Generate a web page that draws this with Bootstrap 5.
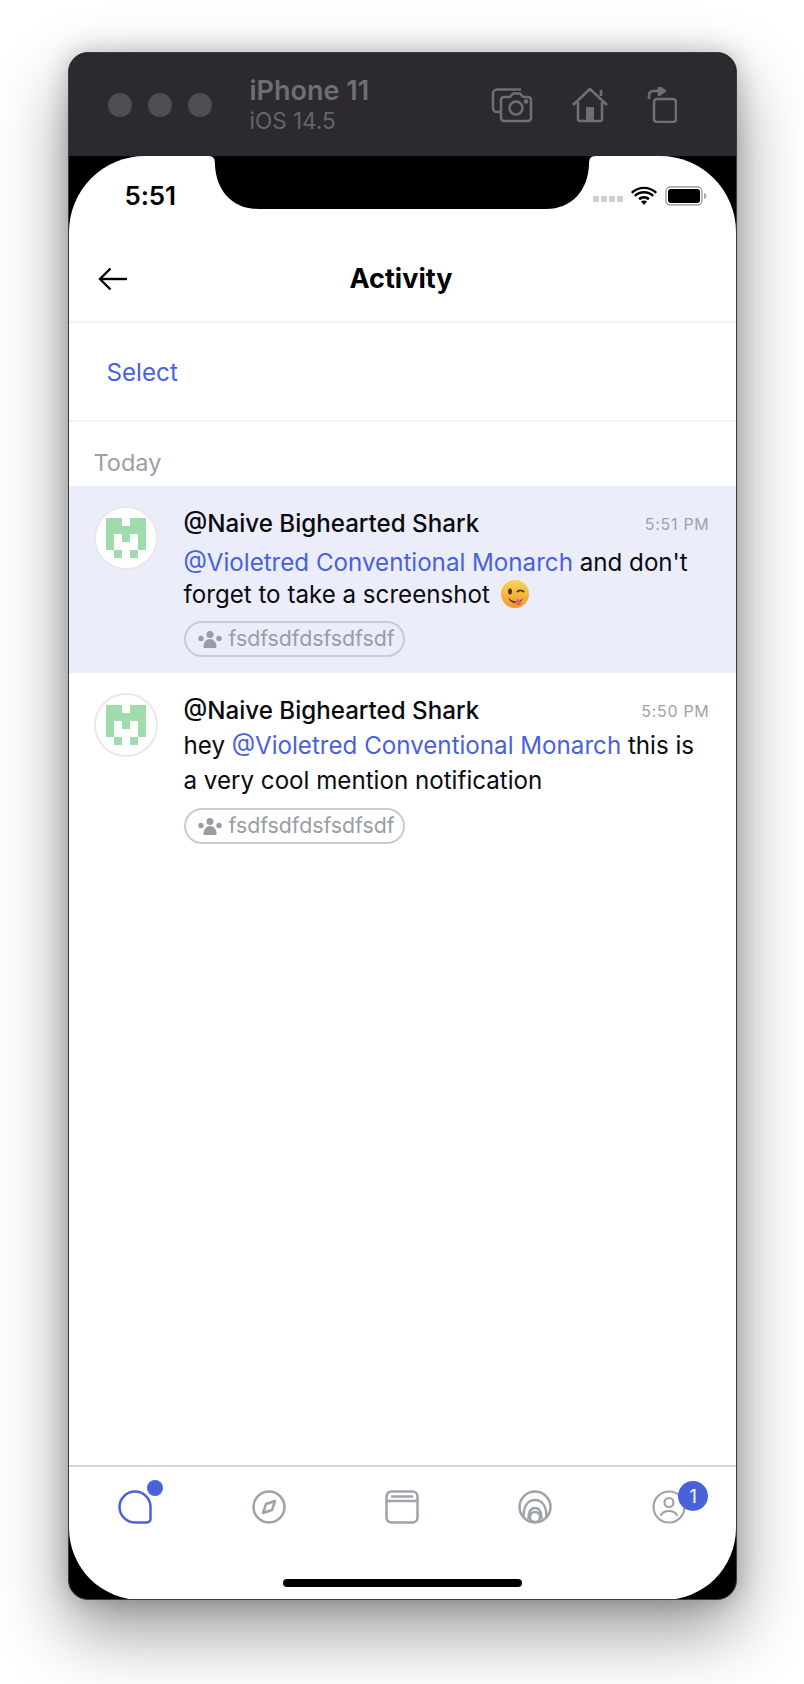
<!DOCTYPE html>
<html lang="en">
<head>
<meta charset="utf-8">
<title>Activity</title>
<link href="https://cdn.jsdelivr.net/npm/bootstrap@5.3.0/dist/css/bootstrap.min.css" rel="stylesheet">
<style>
html,body{background:#fff;font-family:Inter,"Liberation Sans",sans-serif;}
body{width:804px;height:1684px;overflow:hidden;}
.sim-device{width:669px;height:1548px;margin:52px 0 0 67.5px;border-radius:20px;background:#000;overflow:hidden;box-shadow:0 30px 70px rgba(0,0,0,.42),0 0 24px rgba(0,0,0,.22);border:1px solid #3a393d;}
.sim-bar{height:103px;background:#2c2a2f;color:#6f6e73;padding-left:39px;padding-right:59px;}
.sim-dot{width:24px;height:24px;border-radius:50%;background:#4e4d52;}
.sim-dots{gap:16px;margin-right:38px;}
.sim-name{font-size:27px;font-weight:600;line-height:32px;color:#6f6e73;margin-top:-1px;}
.sim-os{font-size:22.5px;line-height:27px;color:#656469;}
.sim-tools{gap:38px;}
.sim-cam{margin-left:2px;}
.sim-screen{position:relative;height:1444px;background:#fff;border-radius:76px 76px 72px 72px;}
.sim-notch{position:absolute;left:139px;top:0;}
.sim-status{height:85px;padding:0 29px 0 56px;}
.sim-clock{font-size:26px;font-weight:600;color:#000;margin-top:-6px;letter-spacing:-.2px;}
.sim-sig{gap:2px;margin-right:8px;margin-top:0;}
.sim-sig i{display:block;width:6px;height:6px;background:#cfcfcf;border-radius:1px;}
.sim-up{margin-top:-6px;}
.sim-head{height:82px;padding:0 24px 4px 29px;border-bottom:2px solid #f1f3f6;position:relative;}
.sim-title{font-size:27px;font-weight:700;color:#000;flex:1;text-align:center;margin-right:37px;}
.sim-select{height:99px;padding:3px 0 0 38px;border-bottom:2px solid #f1f3f6;font-size:24.2px;color:#4a61dc;}
.sim-day{height:64px;padding:18px 0 0 25px;font-size:23.5px;line-height:46px;color:#9ba0a6;}
.sim-row{padding:21px 26px 0 25px;height:187px;}
.sim-row.sim-new{background:#ebedfa;}
.sim-row.sim-plain{height:174px;}
.sim-ava{width:64px;height:64px;border-radius:50%;background:#fff;border:2px solid #e9e9ea;flex:none;margin-right:26px;margin-top:-1px;}
.sim-who{font-size:24.15px;font-weight:500;line-height:34px;color:#0b0b0f;}
.sim-when{font-size:16px;letter-spacing:.7px;color:#9ea3a9;line-height:34px;}
.sim-msg{font-size:24.15px;line-height:32px;color:#0b0b0f;margin-top:6px;}
.sim-plain .sim-msg{line-height:35px;margin-top:0;}
.sim-at{color:#4a61dc;}
.sim-wink{margin-left:3px;}
.sim-chip{height:36px;width:221px;border:2px solid #c9ccd3;border-radius:18px;margin-top:10px;padding-left:12px;gap:7px;font-size:21.3px;color:#989ca3;}
.sim-tabs{position:absolute;left:0;right:0;top:1309px;height:135px;border-top:2px solid #d4d5d7;}
.sim-tab{flex:1 1 0;position:relative;height:80px;}
.sim-pip{position:absolute;width:16px;height:16px;border-radius:50%;background:#4a61dc;left:78px;top:13px;}
.sim-count{position:absolute;width:30px;height:30px;border-radius:50%;background:#4a61dc;color:#fff;font-size:18px;left:76px;top:14px;}
.sim-homebar{position:absolute;left:214px;top:1423px;width:239px;height:8px;border-radius:4px;background:#000;}
</style>
</head>
<body>
<div class="sim-device">
  <div class="sim-bar d-flex align-items-center">
    <div class="sim-dots d-flex"><span class="sim-dot"></span><span class="sim-dot"></span><span class="sim-dot"></span></div>
    <div class="flex-grow-1">
      <div class="sim-name">iPhone 11</div>
      <div class="sim-os">iOS 14.5</div>
    </div>
    <div class="sim-tools d-flex align-items-center">
      <svg class="sim-cam" width="42" height="36" viewBox="0 0 42 36" fill="none" stroke="#6f6e73" stroke-width="2.6" stroke-linejoin="round"><path d="M30 2.5H6a4 4 0 0 0-4 4V21a4 4 0 0 0 4 4h3"/><path d="M13 10h6l3-3.5h7l3 3.5h5a3 3 0 0 1 3 3v18a3 3 0 0 1-3 3H13a3 3 0 0 1-3-3V13a3 3 0 0 1 3-3z"/><circle cx="25" cy="21" r="6.5"/><circle cx="35" cy="14.5" r="1" fill="#6f6e73"/></svg>
      <svg width="38" height="36" viewBox="0 0 38 36" fill="none" stroke="#6f6e73" stroke-width="2.6" stroke-linejoin="round"><path d="M2 18 19 2l17 16"/><path d="M30 9V3"/><path d="M7 15v17a2 2 0 0 0 2 2h20a2 2 0 0 0 2-2V15"/><rect x="15" y="20" width="8" height="14" fill="#6f6e73" stroke="none"/></svg>
      <svg width="30" height="36" viewBox="0 0 30 36" fill="none" stroke="#6f6e73" stroke-width="2.6" stroke-linejoin="round"><rect x="7" y="12" width="22" height="23" rx="3"/><path d="M2 12V8a4 4 0 0 1 4-4h6"/><path d="M12 0l6 4-6 4z" fill="#6f6e73"/></svg>
    </div>
  </div>
  <div class="sim-screen">
    <svg class="sim-notch" width="388" height="54" viewBox="0 0 388 54"><path d="M0 0C6 0 7 3 7 9C8 34 24 53 50 53H338C364 53 380 34 381 9C381 3 382 0 388 0Z" fill="#000"/></svg>
    <div class="sim-status d-flex align-items-center justify-content-between">
      <div class="sim-clock">5:51</div>
      <div class="d-flex align-items-center">
        <div class="sim-sig d-flex"><i></i><i></i><i></i><i></i></div>
        <svg class="me-2 sim-up" width="26" height="19" viewBox="0 0 26 19"><path d="M13 3C8.500 3 4.500 4.800 1.500 7.700L0 6C3.400 2.700 8 .7 13 .7s9.600 2 13 5.300l-1.500 1.700C21.500 4.800 17.500 3 13 3z"/><path d="M13 7.500c-3.200 0-6 1.200-8.200 3.200L3 8.900C5.700 6.400 9.200 4.900 13 4.900s7.300 1.500 10 4l-1.800 1.800C19 8.700 16.200 7.500 13 7.500z"/><path d="M13 10c-2.300 0-4.300.9-5.800 2.300L9 14.200c1-.9 2.500-1.500 4-1.500s3 .6 4 1.500l1.800-1.900C17.300 10.900 15.300 10 13 10z"/><path d="M13 19l-3-3.500c.8-.6 1.900-1 3-1s2.200.4 3 1z"/></svg>
        <svg class="sim-up" width="42" height="20" viewBox="0 0 42 20"><rect x=".9" y=".9" width="36" height="18" rx="4.500" fill="none" stroke="#a9a9a9" stroke-width="1.600"/><rect x="3" y="3" width="32" height="14" rx="3"/><path d="M39 7c1.600.4 2.400 1.500 2.400 3s-.8 2.600-2.400 3z" fill="#a9a9a9"/></svg>
      </div>
    </div>
    <div class="sim-head d-flex align-items-center">
      <svg width="30" height="24" viewBox="0 0 30 24" fill="none" stroke="#000" stroke-width="2.400"><path d="M29 12H2"/><path d="M12.500 1.500 2 12l10.500 10.500"/></svg>
      <div class="sim-title">Activity</div>
    </div>
    <div class="sim-select d-flex align-items-center">Select</div>
    <div class="sim-day">Today</div>

    <div class="sim-row sim-new d-flex">
      <div class="sim-ava d-flex align-items-center justify-content-center">
        <svg width="40" height="40" viewBox="0 0 5 5" fill="#a0dcab" shape-rendering="crispEdges"><path d="M0 0h2v1h1V0h2v4H4V3H4V2H3v1H2V2H1v2H0z"/><rect x="1" y="4" width="1" height="1"/><rect x="3" y="4" width="1" height="1"/></svg>
      </div>
      <div class="flex-grow-1">
        <div class="d-flex justify-content-between"><span class="sim-who">@Naive Bighearted Shark</span><span class="sim-when">5:51 PM</span></div>
        <div class="sim-msg"><span class="sim-at">@Violetred Conventional Monarch</span> and don't forget to take a screenshot
          <svg width="30" height="30" viewBox="0 0 30 30" class="align-text-bottom sim-wink"><defs><linearGradient id="fa" x1="0" y1="0" x2="0" y2="1"><stop offset="0" stop-color="#fbd35a"/><stop offset="1" stop-color="#f09a2c"/></linearGradient></defs><circle cx="15" cy="15" r="14" fill="url(#fa)"/><ellipse cx="10" cy="12.500" rx="2" ry="3" fill="#50341a"/><path d="M17 13c2-2 5-2 7 0" fill="none" stroke="#50341a" stroke-width="2"/><path d="M8 18c3 5 11 6 15 1-2 7-13 7-15-1z" fill="#50341a"/><path d="M17 20c3 1 5 3 3 6-3 1-5-1-5-3z" fill="#ef5f6b"/></svg>
        </div>
        <div class="sim-chip d-inline-flex align-items-center">
          <svg width="24" height="17" viewBox="0 0 24 17" fill="#989ca3"><circle cx="12" cy="3.500" r="3.500"/><circle cx="3" cy="7.500" r="2.700"/><circle cx="21" cy="7.500" r="2.700"/><path d="M5.500 16c0-5 3-8 6.500-8s6.500 3 6.500 8c0 1-1 1-2 1h-9c-1 0-2 0-2-1z"/></svg>
          <span>fsdfsdfdsfsdfsdf</span>
        </div>
      </div>
    </div>

    <div class="sim-row sim-plain d-flex">
      <div class="sim-ava d-flex align-items-center justify-content-center">
        <svg width="40" height="40" viewBox="0 0 5 5" fill="#a0dcab" shape-rendering="crispEdges"><path d="M0 0h2v1h1V0h2v4H4V3H4V2H3v1H2V2H1v2H0z"/><rect x="1" y="4" width="1" height="1"/><rect x="3" y="4" width="1" height="1"/></svg>
      </div>
      <div class="flex-grow-1">
        <div class="d-flex justify-content-between"><span class="sim-who">@Naive Bighearted Shark</span><span class="sim-when">5:50 PM</span></div>
        <div class="sim-msg">hey <span class="sim-at">@Violetred Conventional Monarch</span> this is <br>a very cool mention notification</div>
        <div class="sim-chip d-inline-flex align-items-center">
          <svg width="24" height="17" viewBox="0 0 24 17" fill="#989ca3"><circle cx="12" cy="3.500" r="3.500"/><circle cx="3" cy="7.500" r="2.700"/><circle cx="21" cy="7.500" r="2.700"/><path d="M5.500 16c0-5 3-8 6.500-8s6.500 3 6.500 8c0 1-1 1-2 1h-9c-1 0-2 0-2-1z"/></svg>
          <span>fsdfsdfdsfsdfsdf</span>
        </div>
      </div>
    </div>

    <div class="sim-tabs d-flex">
      <div class="sim-tab d-flex align-items-center justify-content-center">
        <svg width="34" height="34" viewBox="0 0 34 34" fill="none" stroke="#4a61dc" stroke-width="2.500"><path d="M17 1.500C25.500 1.500 32.500 8.500 32.500 17V29a3.500 3.500 0 0 1-3.500 3.500H17C8.500 32.500 1.500 25.500 1.500 17S8.500 1.500 17 1.500z"/></svg>
        <span class="sim-pip"></span>
      </div>
      <div class="sim-tab d-flex align-items-center justify-content-center">
        <svg width="34" height="34" viewBox="0 0 34 34" fill="none" stroke="#9ea3a9" stroke-width="2.500"><circle cx="17" cy="17" r="15.500"/><path d="M23 11 20 20 11 23 14 14z" stroke-linejoin="round"/></svg>
      </div>
      <div class="sim-tab d-flex align-items-center justify-content-center">
        <svg width="34" height="34" viewBox="0 0 34 34" fill="none" stroke="#9ea3a9" stroke-width="2.500"><rect x="1.500" y="1.500" width="31" height="31" rx="5"/><path d="M1.500 11h31"/><path d="M7 6.500h20" stroke-linecap="round"/></svg>
      </div>
      <div class="sim-tab d-flex align-items-center justify-content-center">
        <svg width="34" height="34" viewBox="0 0 34 34" fill="none" stroke="#9ea3a9" stroke-width="2.500"><circle cx="17" cy="17" r="15.500"/><path d="M5.500 27C5.500 16 10 10 17 10s11.500 6 11.500 17"/><path d="M10.500 29.500C10.500 22 13 18 17 18s6.500 4 6.500 11.500"/><circle cx="17" cy="27" r="5"/></svg>
      </div>
      <div class="sim-tab d-flex align-items-center justify-content-center">
        <svg width="34" height="34" viewBox="0 0 34 34" fill="none" stroke="#9ea3a9" stroke-width="2.200"><circle cx="17" cy="17" r="15.500"/><circle cx="17" cy="12.500" r="4.500"/><path d="M9 25c2-3 5-4 8-4s6 1 8 4" stroke-linecap="round"/></svg>
        <span class="sim-count d-flex align-items-center justify-content-center">1</span>
      </div>
    </div>
    <div class="sim-homebar"></div>
  </div>
</div>
<script src="https://cdn.jsdelivr.net/npm/bootstrap@5.3.0/dist/js/bootstrap.bundle.min.js"></script>
</body>
</html>
